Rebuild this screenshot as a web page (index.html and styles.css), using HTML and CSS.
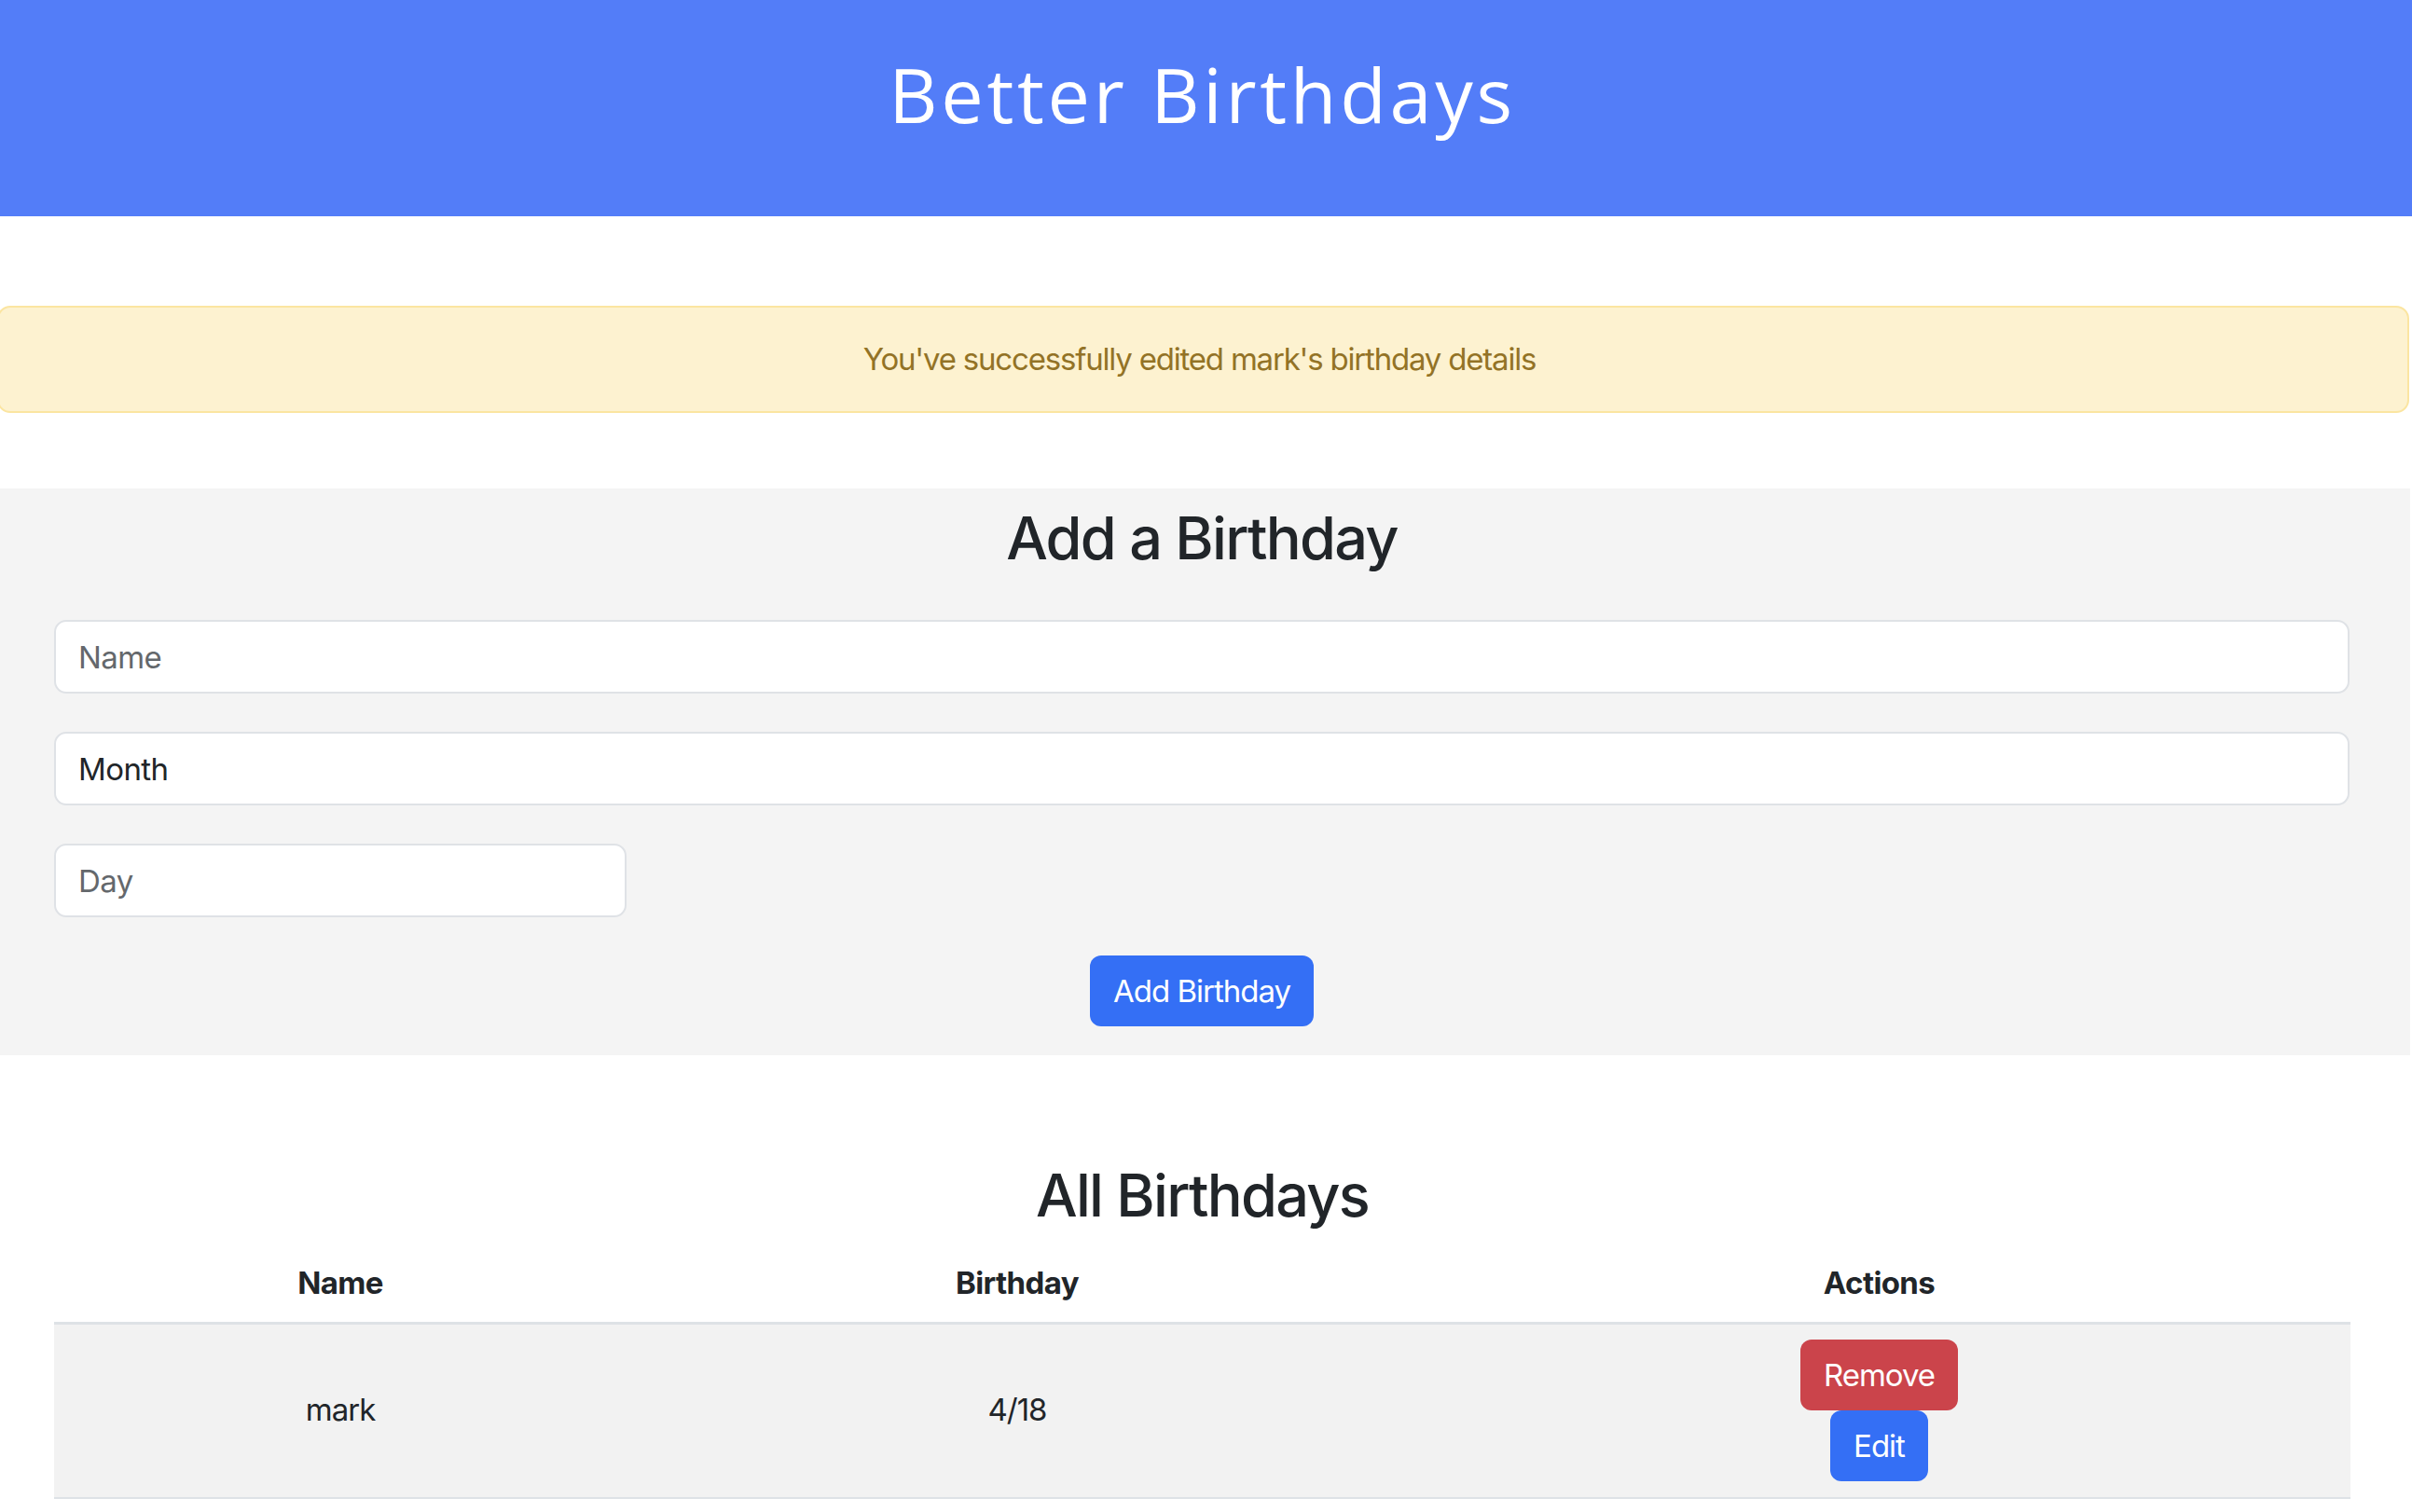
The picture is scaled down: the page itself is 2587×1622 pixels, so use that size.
FILE: index.html
```html
<!DOCTYPE html>
<html lang="en">
<head>
<meta charset="utf-8">
<title>Better Birthdays</title>
<link rel="stylesheet" href="styles.css">
</head>
<body>
<header class="site-header">
  <h1 class="site-title">Better Birthdays</h1>
</header>
<main class="page">
  <div class="alert">You've successfully edited mark's birthday details</div>

  <section class="add-panel">
    <h2 class="section-title">Add a Birthday</h2>
    <form class="add-form">
      <input class="field" type="text" placeholder="Name">
      <select class="field field-select">
        <option>Month</option>
      </select>
      <input class="field field-day" type="text" placeholder="Day">
      <div class="form-actions">
        <button class="btn btn-primary" type="button">Add Birthday</button>
      </div>
    </form>
  </section>

  <section class="list">
    <h2 class="section-title">All Birthdays</h2>
    <table class="birthday-table">
      <colgroup>
        <col class="col-name">
        <col class="col-date">
        <col class="col-actions">
      </colgroup>
      <thead>
        <tr>
          <th>Name</th>
          <th>Birthday</th>
          <th>Actions</th>
        </tr>
      </thead>
      <tbody>
        <tr>
          <td>mark</td>
          <td>4/18</td>
          <td>
            <div class="actions">
              <button class="btn btn-danger" type="button">Remove</button>
              <button class="btn btn-primary" type="button">Edit</button>
            </div>
          </td>
        </tr>
      </tbody>
    </table>
  </section>
</main>
</body>
</html>
```

FILE: styles.css
```css
* {
  box-sizing: border-box;
}

html, body {
  margin: 0;
  padding: 0;
  background: #ffffff;
}

body {
  font-family: Inter, "Liberation Sans", sans-serif;
  font-size: 33px;
  line-height: 49.5px;
  letter-spacing: -1px;
  color: #212529;
  overflow: hidden;
}

.site-header {
  height: 232px;
  background: #537df8;
  display: flex;
  align-items: center;
  justify-content: center;
  padding-right: 8px;
  padding-bottom: 32px;
}

.site-title {
  margin: 0;
  font-family: "Open Sans", sans-serif;
  font-weight: 400;
  font-size: 81px;
  line-height: 99px;
  color: #ffffff;
  letter-spacing: 3.7px;
}

.page {
  width: 2587px;
}

.alert {
  margin: 96px 0 0 -3px;
  width: 2587px;
  height: 115px;
  padding: 31px 8px 0 0;
  background: #fdf2d0;
  border: 2px solid #fbe5a1;
  border-radius: 14px;
  color: #937326;
  text-align: center;
  letter-spacing: -1.2px;
}

.add-panel {
  margin-top: 81px;
  width: 2585px;
  height: 608px;
  background: #f4f4f4;
  padding: 14px 65px 0 58px;
}

.section-title {
  margin: 0;
  font-size: 63px;
  line-height: 79px;
  font-weight: 500;
  letter-spacing: -1.7px;
  text-align: center;
  color: #212529;
}

.add-form {
  display: flex;
  flex-direction: column;
  align-items: flex-start;
  margin-top: 48px;
  gap: 41px;
}

.field {
  display: block;
  width: 2462px;
  height: 79px;
  margin: 0;
  padding: 0 24px;
  border: 2px solid #dfe2e6;
  border-radius: 13px;
  background: #ffffff;
  font-family: inherit;
  font-size: 33px;
  letter-spacing: -0.6px;
  color: #212529;
  outline: none;
}

.field::placeholder {
  color: #64686c;
}

.field-select {
  -webkit-appearance: none;
  appearance: none;
}

.field-day {
  width: 614px;
}

.form-actions {
  width: 2462px;
  display: flex;
  justify-content: center;
}

.btn {
  display: inline-block;
  height: 76px;
  padding: 0 25px;
  border: 0;
  border-radius: 12px;
  font-family: inherit;
  font-size: 33px;
  line-height: 76px;
  letter-spacing: -1px;
  color: #ffffff;
  cursor: pointer;
}

.btn-primary {
  background: #346ff5;
}

.btn-danger {
  background: #cb444b;
}

.list {
  padding: 111px 66px 0 58px;
}

.birthday-table {
  margin-top: 13px;
  width: 2463px;
  border-collapse: collapse;
  table-layout: fixed;
}

.col-name { width: 614px; }
.col-date { width: 838px; }
.col-actions { width: 1011px; }

.birthday-table th,
.birthday-table td {
  padding: 16.5px;
  text-align: center;
  vertical-align: middle;
}

.birthday-table th {
  font-weight: 700;
  letter-spacing: -0.6px;
  border-bottom: 3px solid #dee2e6;
}

.birthday-table tbody tr {
  background: #f2f2f2;
  border-bottom: 2px solid #dee2e6;
}

.actions {
  display: flex;
  flex-direction: column;
  align-items: center;
}
```
